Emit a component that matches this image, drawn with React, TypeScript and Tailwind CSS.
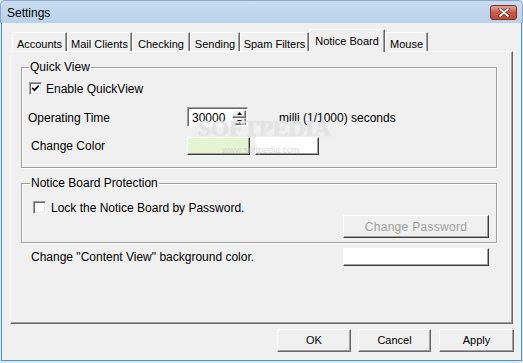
import React from 'react'

const tabs = [
  { label: 'Accounts', w: 'w-[55px]' },
  { label: 'Mail Clients', w: 'w-[65px]' },
  { label: 'Checking', w: 'w-[58px]' },
  { label: 'Sending', w: 'w-[50px]' },
  { label: 'Spam Filters', w: 'w-[69px]' },
  { label: 'Notice Board', w: 'w-[76px]', active: true },
  { label: 'Mouse', w: 'w-[43px]' },
]

function Checkbox({ checked }: { checked?: boolean }) {
  return (
    <div className="w-[13px] h-[13px] shrink-0 bg-white border-t border-l border-[#a0a0a0] border-r border-b border-r-white border-b-white shadow-[inset_1px_1px_0_#696969,inset_-1px_-1px_0_#e3e3e3] flex items-center justify-center">
      {checked && (
        <svg width="9" height="9" viewBox="0 0 9 9">
          <polyline points="1.2,3.8 3.4,6.2 7.8,1.6" fill="none" stroke="#000" strokeWidth="1.7" />
        </svg>
      )}
    </div>
  )
}

function GroupBox({ label, labelLeft, className, children }: { label: string; labelLeft: string; className: string; children: React.ReactNode }) {
  return (
    <div className={`relative border border-[#a0a0a0] shadow-[inset_1px_1px_0_#fff,1px_1px_0_#fff] ${className}`}>
      <span className={`absolute -top-[8px] ${labelLeft} bg-[#f0f0f0] px-[1px] leading-[14px]`}>{label}</span>
      {children}
    </div>
  )
}

function Arrow({ up }: { up?: boolean }) {
  return (
    <svg width="5" height="3" viewBox="0 0 5 3">
      <polygon points={up ? '2.5,0 5,3 0,3' : '0,0 5,0 2.5,3'} fill="#000" />
    </svg>
  )
}

function Raised({ className, children }: { className: string; children?: React.ReactNode }) {
  return (
    <div
      className={`border-t border-l border-white border-r border-b border-r-[#3c3c3c] border-b-[#3c3c3c] shadow-[inset_-1px_-1px_0_#a0a0a0] flex items-center justify-center ${className}`}
    >
      {children}
    </div>
  )
}

export default function App() {
  return (
    <div className="w-[523px] h-[363px] flex flex-col overflow-hidden bg-[#dde9f6] font-['Liberation_Sans',Arial,sans-serif] text-[12px] text-black">
      {/* title bar */}
      <div className="h-[23px] shrink-0 flex items-center justify-between rounded-t-[5px] border-t border-x border-[#8ea9c8] bg-gradient-to-b from-[#c9dcf0] to-[#b9d1ea]">
        <span className="pl-[6px] pt-[1px]">Settings</span>
        <div className="mr-[5px] w-[27px] h-[15px] rounded-[3px] border border-[#7a2e28] bg-gradient-to-b from-[#e3a597] via-[#c95a48] to-[#c24a33] flex items-center justify-center">
          <svg width="12" height="9" viewBox="0 0 12 9">
            <path d="M2 1 L10 8 M10 1 L2 8" stroke="#4a1a16" strokeWidth="3.2" strokeLinecap="round" />
            <path d="M2 1 L10 8 M10 1 L2 8" stroke="#fff" strokeWidth="1.8" strokeLinecap="round" />
          </svg>
        </div>
      </div>

      <div className="flex-1 flex px-[1px] pb-[2px]">
        <div className="flex-1 flex flex-col bg-[#f0f0f0] border-l border-r border-b border-[#4594d8] pl-[8px] pt-[6px]">
          {/* tabs */}
          <div className="h-[22px] flex items-end pl-[2px]">
            {tabs.map((t) =>
              t.active ? (
                <div
                  key={t.label}
                  className={`${t.w} relative z-10 h-[23px] -mb-[1px] bg-[#f0f0f0] border-l border-t border-white border-r border-r-[#696969] shadow-[inset_-1px_0_0_#a0a0a0] text-[11px] flex justify-center pt-[3px]`}
                >
                  {t.label}
                </div>
              ) : (
                <div
                  key={t.label}
                  className={`${t.w} h-[19px] bg-[#f0f0f0] border-l border-t border-white border-r border-r-[#696969] shadow-[inset_-1px_0_0_#a0a0a0] text-[11px] flex justify-center pt-[3px]`}
                >
                  {t.label}
                </div>
              )
            )}
          </div>

          {/* tab panel */}
          <div className="relative w-[503px] h-[273px] bg-[#f0f0f0] border-t border-l border-white border-r border-b border-r-[#696969] border-b-[#696969] shadow-[inset_-1px_-1px_0_#a0a0a0]">
            <GroupBox label="Quick View" labelLeft="left-[7px]" className="ml-[10px] mt-[15px] w-[476px] h-[101px]">
              <div className="mt-[14px] pl-[7px] flex items-center h-[13px]">
                <Checkbox checked />
                <span className="ml-[4px]">Enable QuickView</span>
              </div>
              <div className="mt-[12px] pl-[6px] flex items-center h-[20px]">
                <span className="w-[159px] pt-[2px]">Operating Time</span>
                <div className="w-[61px] h-[20px] flex bg-white border-t border-l border-[#a0a0a0] border-r border-b border-r-white border-b-white shadow-[inset_1px_1px_0_#696969]">
                  <span className="flex-1 pl-[4px] leading-[18px] pt-[1px]">30000</span>
                  <div className="w-[15px] flex flex-col py-[1px] pr-[1px] pt-[2px]">
                    <Raised className="flex-1 border-r-[#696969] border-b-[#696969] bg-[#f0f0f0]">
                      <Arrow up />
                    </Raised>
                    <Raised className="flex-1 border-r-[#696969] border-b-[#696969] bg-[#f0f0f0]">
                      <Arrow />
                    </Raised>
                  </div>
                </div>
                <span className="ml-[31px] pt-[1px]">milli (1/1000) seconds</span>
              </div>
              <div className="mt-[10px] pl-[9px] flex items-center h-[18px]">
                <span className="w-[156px]">Change Color</span>
                <Raised className="w-[63px] h-[18px] bg-[#e6f4d4]" />
                <Raised className="ml-[5px] w-[64px] h-[18px] bg-white" />
              </div>
            </GroupBox>

            <GroupBox label="Notice Board Protection" labelLeft="left-[8px]" className="ml-[10px] mt-[15px] w-[476px] h-[60px]">
              <div className="mt-[17px] pl-[11px] flex items-center h-[13px]">
                <Checkbox />
                <span className="ml-[5px]">Lock the Notice Board by Password.</span>
              </div>
              <div className="mt-[1px] flex justify-end pr-[7px]">
                <Raised className="w-[146px] h-[23px] bg-[#f0f0f0] text-[#a0a0a0] tracking-[0.3px]">Change Password</Raised>
              </div>
            </GroupBox>

            <div className="mt-[5px] pl-[20px] flex items-center h-[18px]">
              <span className="w-[312px]">Change "Content View" background color.</span>
              <Raised className="w-[146px] h-[18px] bg-white" />
            </div>

            {/* watermark */}
            <span className="absolute left-[187px] top-[64px] text-[24px] font-bold leading-none tracking-[-0.5px] font-['Liberation_Serif',serif] text-white/50 [text-shadow:0_0_1px_#c8c8c8] pointer-events-none">
              SOFTPEDIA
            </span>
            <span className="absolute left-[211px] top-[94px] text-[9px] leading-none text-[#c8c8c8]/70 pointer-events-none">
              www.softpedia.com
            </span>
          </div>

          {/* bottom buttons */}
          <div className="mt-[5px] flex justify-end pr-[7px] text-[11px]">
            <Raised className="w-[74px] h-[23px] bg-[#f0f0f0] border-r-[#696969] border-b-[#696969]">OK</Raised>
            <Raised className="ml-[7px] w-[73px] h-[23px] bg-[#f0f0f0] border-r-[#696969] border-b-[#696969]">Cancel</Raised>
            <Raised className="ml-[8px] w-[75px] h-[23px] bg-[#f0f0f0] border-r-[#696969] border-b-[#696969]">Apply</Raised>
          </div>
        </div>
      </div>
    </div>
  )
}
